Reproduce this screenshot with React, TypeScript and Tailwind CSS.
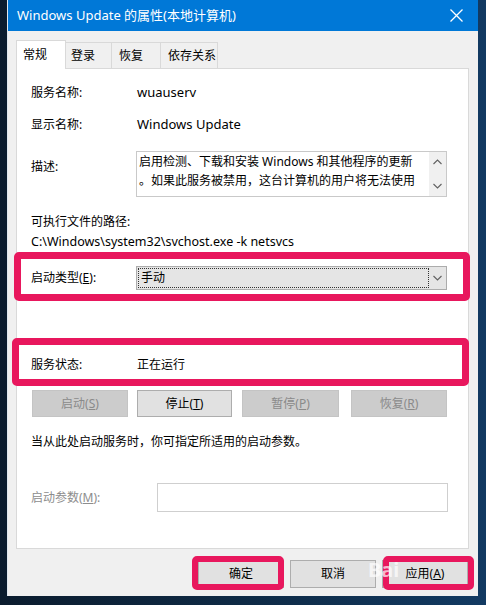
const red = "absolute border-[#e8175d] rounded-[5px]";

function Chevron({ up = false }: { up?: boolean }) {
  return (
    <svg width="9" height="6" viewBox="0 0 9 6" className="block">
      <path
        d={up ? "M0.5 5 L4.5 1 L8.5 5" : "M0.5 1 L4.5 5 L8.5 1"}
        fill="none"
        stroke="#606060"
        strokeWidth="1.1"
      />
    </svg>
  );
}

function SvcButton({ label, k, enabled, w, ml }: { label: string; k: string; enabled?: boolean; w: string; ml: string }) {
  return (
    <div
      className={`${w} ${ml} h-[27px] flex items-center justify-center border ${
        enabled ? "bg-[#e1e1e1] border-[#adadad] text-black" : "bg-[#cccccc] border-[#c4c4c4] text-[#8a8a8a]"
      }`}
    >
      {label}(<u>{k}</u>)
    </div>
  );
}

export default function App() {
  return (
    <div className="w-[486px] h-[605px] bg-gradient-to-r from-[#0b1c2e] via-[#0e2a45] to-[#123a62] overflow-hidden font-['Noto_Sans','Noto_Sans_CJK_SC',sans-serif] text-[12px] text-black">
      <div className="relative ml-[7px] w-[471px] h-[596px] bg-[#f0f0f0] flex flex-col border-l border-[#dfe8f0]">
        {/* title bar */}
        <div className="h-[31px] shrink-0 bg-[#0078d7] flex items-center pl-[9px] text-white text-[13px]">
          <span>Windows Update 的属性(本地计算机)</span>
          <svg width="13" height="13" viewBox="0 0 13 13" className="ml-auto mr-[15px]">
            <path d="M0.5 0.5 L12.5 12.5 M12.5 0.5 L0.5 12.5" stroke="#ffffff" strokeWidth="1.3" />
          </svg>
        </div>

        {/* tabs */}
        <div className="flex items-end pt-[9px] pl-[8px] shrink-0">
          <div className="relative z-10 -mb-px w-[50px] h-[29px] bg-white border border-b-0 border-[#d9d9d9] pl-[6px] flex items-center">
            常规
          </div>
          <div className="w-[46px] h-[26px] border border-l-0 border-b-0 border-[#d9d9d9] pl-[5px] flex items-center">登录</div>
          <div className="w-[49px] h-[26px] border border-l-0 border-b-0 border-[#d9d9d9] pl-[7px] flex items-center">恢复</div>
          <div className="w-[57px] h-[26px] border border-l-0 border-b-0 border-[#d9d9d9] pl-[7px] flex items-center">依存关系</div>
        </div>

        {/* panel */}
        <div className="ml-[8px] w-[453px] h-[481px] shrink-0 bg-white border border-[#d9d9d9] flex flex-col pl-[14px]">
          <div className="mt-[14px] h-[20px] flex items-center">
            <div className="w-[106px]">服务名称:</div>
            <div className="text-[13px]">wuauserv</div>
          </div>
          <div className="mt-[12px] h-[20px] flex items-center">
            <div className="w-[106px]">显示名称:</div>
            <div className="text-[13px]">Windows Update</div>
          </div>
          <div className="mt-[16px] flex items-start">
            <div className="w-[105px] mt-[6px] h-[20px] flex items-center">描述:</div>
            <div className="w-[311px] h-[46px] border border-[#c9c9c9] flex">
              <div className="flex-1 pl-[2px] leading-[19px] overflow-hidden whitespace-nowrap">
                <div>启用检测、下载和安装 Windows 和其他程序的更新</div>
                <div>。如果此服务被禁用，这台计算机的用户将无法使用</div>
              </div>
              <div className="w-[17px] bg-[#f0f0f0] flex flex-col items-center justify-between py-[7px]">
                <Chevron up />
                <Chevron />
              </div>
            </div>
          </div>
          <div className="mt-[15px] h-[20px] flex items-center">可执行文件的路径:</div>
          <div className="h-[20px] flex items-center text-[12.5px]">C:\Windows\system32\svchost.exe -k netsvcs</div>

          <div className="mt-[14px] h-[24px] flex items-center">
            <div className="w-[105px]">
              启动类型(<u>E</u>):
            </div>
            <div className="w-[311px] h-[24px] bg-[#e5e5e5] border border-[#acacac] flex items-center">
              <div className="ml-[1px] w-[291px] h-[20px] border border-dotted border-[#333] pl-[2px] flex items-center">手动</div>
              <div className="ml-auto mr-[4px]">
                <Chevron />
              </div>
            </div>
          </div>

          <div className="mt-[65px] h-[20px] flex items-center">
            <div className="w-[106px]">服务状态:</div>
            <div>正在运行</div>
          </div>

          <div className="mt-[15px] flex">
            <SvcButton label="启动" k="S" w="w-[96px]" ml="ml-[1px]" />
            <SvcButton label="停止" k="T" enabled w="w-[95px]" ml="ml-[9px]" />
            <SvcButton label="暂停" k="P" w="w-[97px]" ml="ml-[10px]" />
            <SvcButton label="恢复" k="R" w="w-[96px]" ml="ml-[12px]" />
          </div>

          <div className="mt-[15px] h-[20px] flex items-center">当从此处启动服务时，你可指定所适用的启动参数。</div>

          <div className="mt-[31px] h-[29px] flex items-center">
            <div className="w-[126px] text-[#8d8d8d]">
              启动参数(<u>M</u>):
            </div>
            <div className="w-[291px] h-[29px] bg-white border border-[#cfcfcf]" />
          </div>
        </div>

        {/* dialog buttons */}
        <div className="mt-[11px] flex justify-end gap-[6px] pr-[10px]">
          <div className="w-[86px] h-[28px] bg-[#e1e1e1] border border-[#adadad] flex items-center justify-center">确定</div>
          <div className="w-[86px] h-[28px] bg-[#e1e1e1] border border-[#adadad] flex items-center justify-center">取消</div>
          <div className="w-[86px] h-[28px] bg-[#e1e1e1] border border-[#adadad] flex items-center justify-center">
            应用(<u>A</u>)
          </div>
        </div>

        {/* annotation boxes */}
        <div className={`${red} left-[6px] top-[252px] w-[456px] h-[49px] border-[7px]`} />
        <div className={`${red} left-[4px] top-[338px] w-[457px] h-[48px] border-[7px]`} />
        <div className={`${red} left-[184px] top-[556px] w-[92px] h-[34px] border-[6px]`} />
        <div className={`${red} left-[375px] top-[556px] w-[91px] h-[34px] border-[6px]`} />

        {/* watermark */}
        <div className="absolute left-[360px] top-[557px] text-[20px] leading-[26px] font-bold text-white/70">Bai</div>
      </div>
    </div>
  );
}
